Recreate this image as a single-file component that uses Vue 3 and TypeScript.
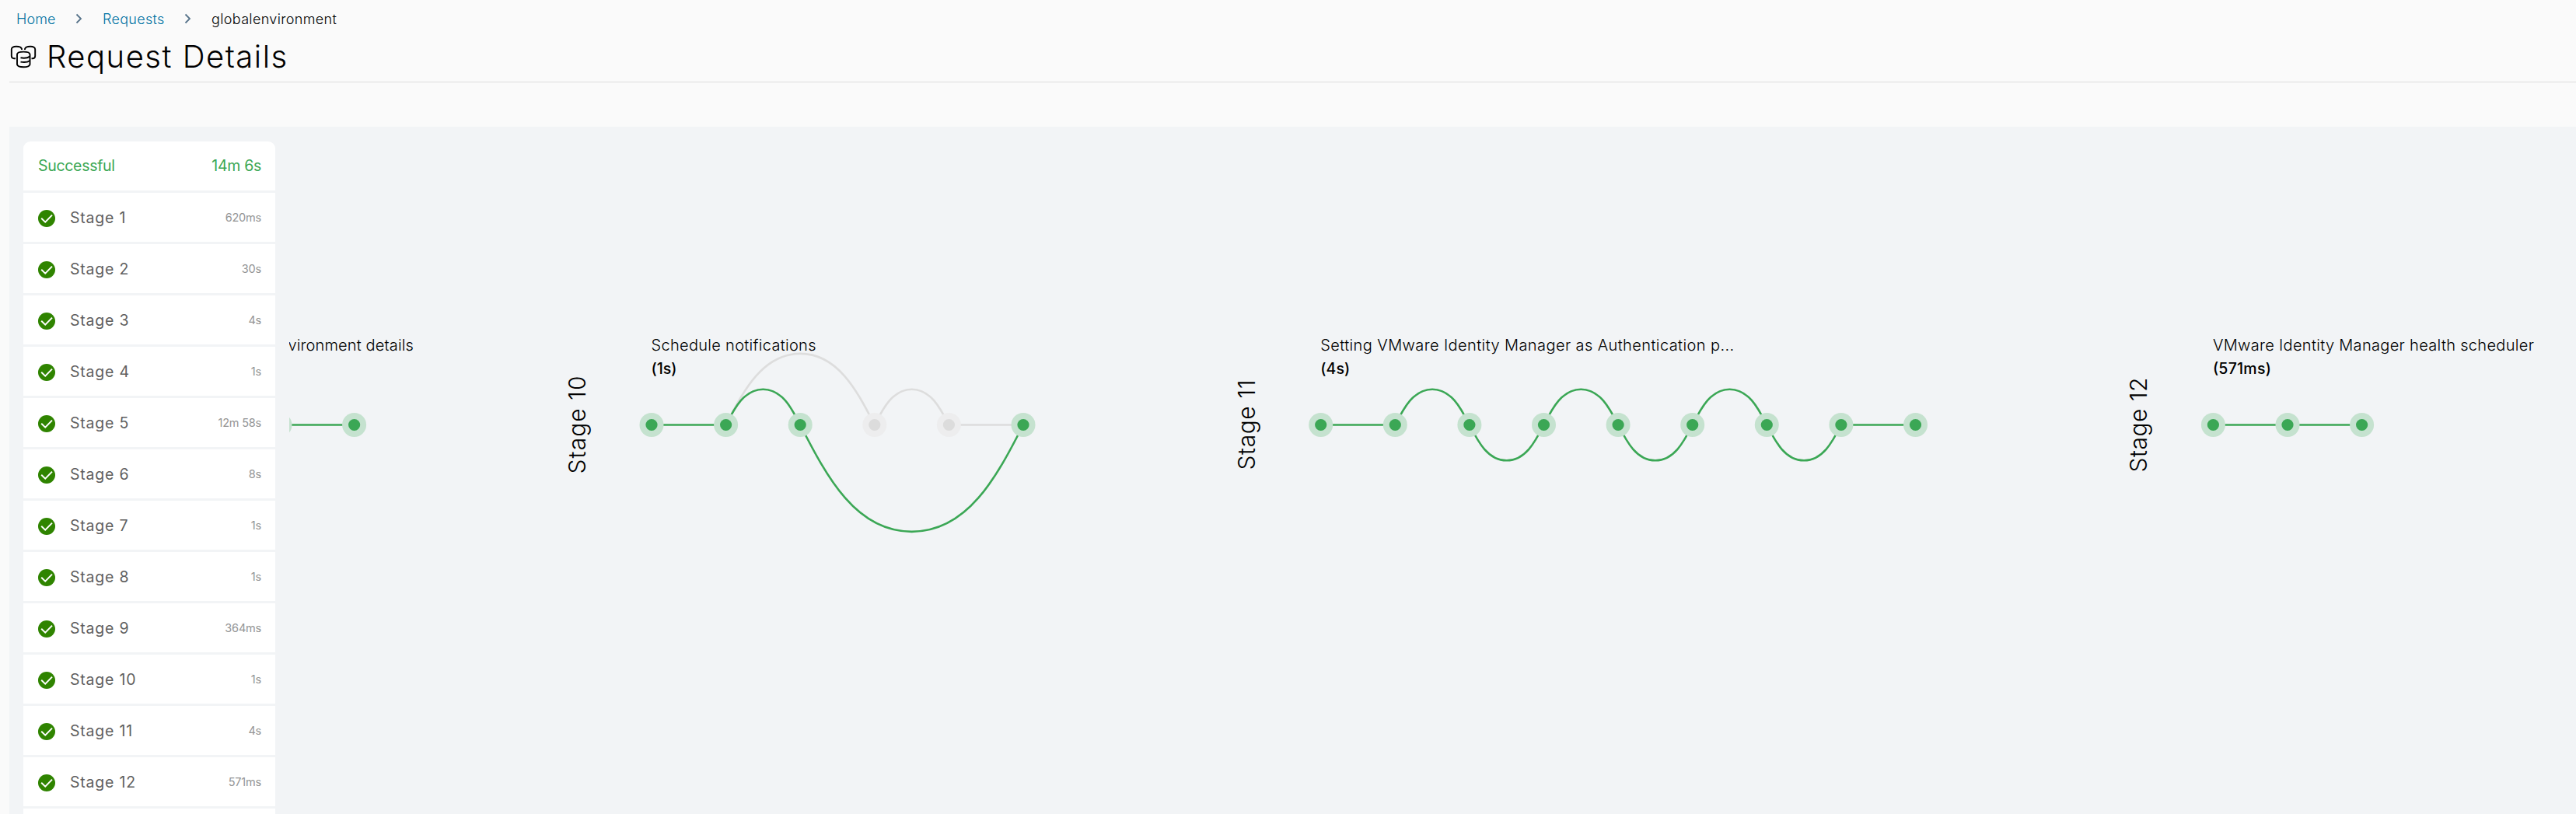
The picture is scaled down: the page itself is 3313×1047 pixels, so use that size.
<script setup lang="ts">
import { ref } from 'vue'

interface StageRow {
  name: string
  time: string
}

interface Edge {
  from: number
  to: number
  kind: 'line' | 'up' | 'down'
  idle?: boolean
}

interface Flow {
  label: string
  labelX: number
  labelLength: number
  title: string
  titleLength: number
  duration: string
  durationLength: number
  x: number
  nodes: boolean[]
  edges: Edge[]
}

const stages = ref<StageRow[]>([
  { name: 'Stage 1', time: '620ms' },
  { name: 'Stage 2', time: '30s' },
  { name: 'Stage 3', time: '4s' },
  { name: 'Stage 4', time: '1s' },
  { name: 'Stage 5', time: '12m 58s' },
  { name: 'Stage 6', time: '8s' },
  { name: 'Stage 7', time: '1s' },
  { name: 'Stage 8', time: '1s' },
  { name: 'Stage 9', time: '364ms' },
  { name: 'Stage 10', time: '1s' },
  { name: 'Stage 11', time: '4s' },
  { name: 'Stage 12', time: '571ms' },
])

const STEP = 95.6
const MID = 546.5

const flows: Flow[] = [
  {
    label: 'Stage 10', labelX: 753.3, labelLength: 126,
    title: 'Schedule notifications', titleLength: 212,
    duration: '(1s)', durationLength: 33,
    x: 838,
    nodes: [true, true, true, false, false, true],
    edges: [
      { from: 1, to: 3, kind: 'up', idle: true },
      { from: 3, to: 4, kind: 'up', idle: true },
      { from: 4, to: 5, kind: 'line', idle: true },
      { from: 0, to: 1, kind: 'line' },
      { from: 1, to: 2, kind: 'up' },
      { from: 2, to: 5, kind: 'down' },
    ],
  },
  {
    label: 'Stage 11', labelX: 1614, labelLength: 116,
    title: 'Setting VMware Identity Manager as Authentication p...', titleLength: 532,
    duration: '(4s)', durationLength: 38,
    x: 1698.7,
    nodes: [true, true, true, true, true, true, true, true, true],
    edges: [
      { from: 0, to: 1, kind: 'line' },
      { from: 1, to: 2, kind: 'up' },
      { from: 2, to: 3, kind: 'down' },
      { from: 3, to: 4, kind: 'up' },
      { from: 4, to: 5, kind: 'down' },
      { from: 5, to: 6, kind: 'up' },
      { from: 6, to: 7, kind: 'down' },
      { from: 7, to: 8, kind: 'line' },
    ],
  },
  {
    label: 'Stage 12', labelX: 2761.3, labelLength: 122,
    title: 'VMware Identity Manager health scheduler', titleLength: 413,
    duration: '(571ms)', durationLength: 75,
    x: 2846.4,
    nodes: [true, true, true],
    edges: [
      { from: 0, to: 1, kind: 'line' },
      { from: 1, to: 2, kind: 'line' },
    ],
  },
]

function edgePath(x0: number, e: Edge): string {
  const a = x0 + e.from * STEP
  const w = (e.to - e.from) * STEP
  if (e.kind === 'line') return `M${a} ${MID}H${a + w}`
  const s = e.kind === 'up' ? -w : w
  const px = (k: number) => (a + k * w).toFixed(2)
  const py = (k: number) => (MID + k * s).toFixed(2)
  return `M${px(0)} ${py(0)}C${px(0.12)} ${py(0.235)} ${px(0.25)} ${py(0.479)} ${px(0.5)} ${py(0.479)}` +
    `S${px(0.88)} ${py(0.235)} ${px(1)} ${py(0)}`
}
</script>

<template>
  <div class="page">
    <nav class="crumbs">
      <a class="home">Home</a>
      <svg class="chev" width="9" height="14" viewBox="0 0 9 14"><path d="M1.5 1.5 7 7 1.5 12.5" /></svg>
      <a class="reqs">Requests</a>
      <svg class="chev" width="9" height="14" viewBox="0 0 9 14"><path d="M1.5 1.5 7 7 1.5 12.5" /></svg>
      <span class="current">globalenvironment</span>
    </nav>
    <header class="head">
      <svg class="logo" width="34" height="30" viewBox="0 0 34 30">
        <path d="M7 17.200H5Q1.800 17.200 1.800 14V5.600Q1.800 1.800 8 1.800T15 5V6" />
        <path d="M27.500 17.200h1.500Q32.200 17.200 32.200 14V5.600Q32.200 1.800 26 1.800T19 5V6" />
        <path d="M9 12Q9 8.600 17.200 8.600T25.500 12V25Q24.500 28.200 17.200 28.200T9 25Z" />
        <path d="M13.500 16.300Q21 17.600 25.500 14.600M13.500 21.600Q21 23 25.500 20" />
      </svg>
      <h1>Request Details</h1>
    </header>
    <main class="panel">
      <aside class="list">
        <div class="row total">
          <span class="state">Successful</span>
          <span class="sum">14m 6s</span>
        </div>
        <div v-for="s in stages" :key="s.name" class="row">
          <svg class="tick" width="22" height="22" viewBox="0 0 22 22">
            <circle cx="11" cy="11" r="11" />
            <path d="M4.200 10.800 9.200 15.600 18 6.600" />
          </svg>
          <span class="name">{{ s.name }}</span>
          <span class="time">{{ s.time }}</span>
        </div>
        <div class="row"></div>
      </aside>
      <svg class="flow" width="2941" height="884" viewBox="372 163 2941 884">
        <text class="title prev" x="532" y="451.300" text-anchor="end">vironment details</text>
        <path class="edge" :d="`M360 ${MID}H455.600`" />
        <g v-for="x in [360, 455.6]" :key="x">
          <circle class="halo" :cx="x" :cy="MID" r="15.500" />
          <circle class="dot" :cx="x" :cy="MID" r="7.600" />
        </g>
        <g v-for="f in flows" :key="f.label">
          <text class="label" text-anchor="middle" :textLength="f.labelLength" :transform="`translate(${f.labelX} ${MID}) rotate(-90)`">{{ f.label }}</text>
          <text class="title" :x="f.x - 0.5" y="451.300" :textLength="f.titleLength">{{ f.title }}</text>
          <text class="duration" :x="f.x - 0.5" y="481.300" :textLength="f.durationLength">{{ f.duration }}</text>
          <path v-for="(e, i) in f.edges" :key="i" class="edge" :class="{ idle: e.idle }" :d="edgePath(f.x, e)" />
          <g v-for="(done, i) in f.nodes" :key="'n' + i" :class="{ idle: !done }">
            <circle class="halo" :cx="f.x + i * STEP" :cy="MID" r="15.500" />
            <circle class="dot" :cx="f.x + i * STEP" :cy="MID" r="7.600" />
          </g>
        </g>
      </svg>
    </main>
  </div>
</template>

<style>
body {
  background: #fafafa;
  overflow: hidden;
}
</style>

<style scoped>
.page {
  box-sizing: border-box;
  width: 3313px;
  height: 1047px;
  padding-left: 12px;
  overflow: hidden;
  background: #fafafa;
  color: #000;
  font-family: Inter, "Open Sans", sans-serif;
  font-weight: 300;
}
.crumbs {
  display: flex;
  align-items: center;
  box-sizing: border-box;
  height: 50px;
  padding: 0 0 2px 9px;
  font-size: 18px;
}
.crumbs a {
  color: #0072a3;
}
.home {
  width: 76px;
  letter-spacing: 0.1px;
}
.reqs {
  width: 105px;
  letter-spacing: 0.3px;
}
.current {
  letter-spacing: 0.35px;
}
.chev {
  margin-right: 26px;
  fill: none;
  stroke: #57738a;
  stroke-width: 1.8;
}
.head {
  display: flex;
  height: 55px;
  border-bottom: 1px solid #ddd;
}
.logo {
  margin: 8px 13px 0 1px;
  fill: none;
  stroke: #000;
  stroke-width: 1.900;
}
h1 {
  margin: 0;
  font-size: 40px;
  line-height: 46px;
  font-weight: 300;
  letter-spacing: 1.5px;
}
.panel {
  display: flex;
  height: 884px;
  margin-top: 57px;
  background: #f2f4f6;
}
.list {
  flex: none;
  display: flex;
  flex-direction: column;
  gap: 3px;
  box-sizing: border-box;
  width: 324px;
  margin: 19px 18px 0;
  height: 865px;
  overflow: hidden;
  border-radius: 9px 9px 0 0;
}
.row {
  flex: none;
  display: flex;
  align-items: center;
  box-sizing: border-box;
  height: 63px;
  padding: 0 18px 0 19px;
  background: #fff;
}
.total {
  justify-content: space-between;
  padding-bottom: 2px;
  color: #3ba755;
  font-size: 19.500px;
  font-weight: 400;
  letter-spacing: -0.3px;
}
.tick {
  margin: 3px 19px 0 0;
  fill: #2f8400;
}
.tick path {
  fill: none;
  stroke: #fff;
  stroke-width: 2;
}
.name {
  flex: 1;
  color: #5f5f5f;
  font-size: 19.500px;
  font-weight: 400;
  letter-spacing: 0.8px;
}
.time {
  color: #949494;
  font-size: 14.500px;
  font-weight: 400;
  letter-spacing: -0.2px;
}
.flow {
  flex: none;
}
.title {
  font-size: 20px;
  font-weight: 300;
}
.prev {
  letter-spacing: 0.15px;
}
.duration {
  font-size: 19.500px;
  font-weight: 500;
}
.label {
  font-size: 30px;
  font-weight: 300;
}
.edge {
  fill: none;
  stroke: #3ba755;
  stroke-width: 2.600;
}
.edge.idle {
  stroke: #ddd;
}
.halo {
  fill: #c5e2cf;
}
.dot {
  fill: #3ba755;
}
.idle .halo {
  fill: #ededee;
}
.idle .dot {
  fill: #dcdcdc;
}
</style>
